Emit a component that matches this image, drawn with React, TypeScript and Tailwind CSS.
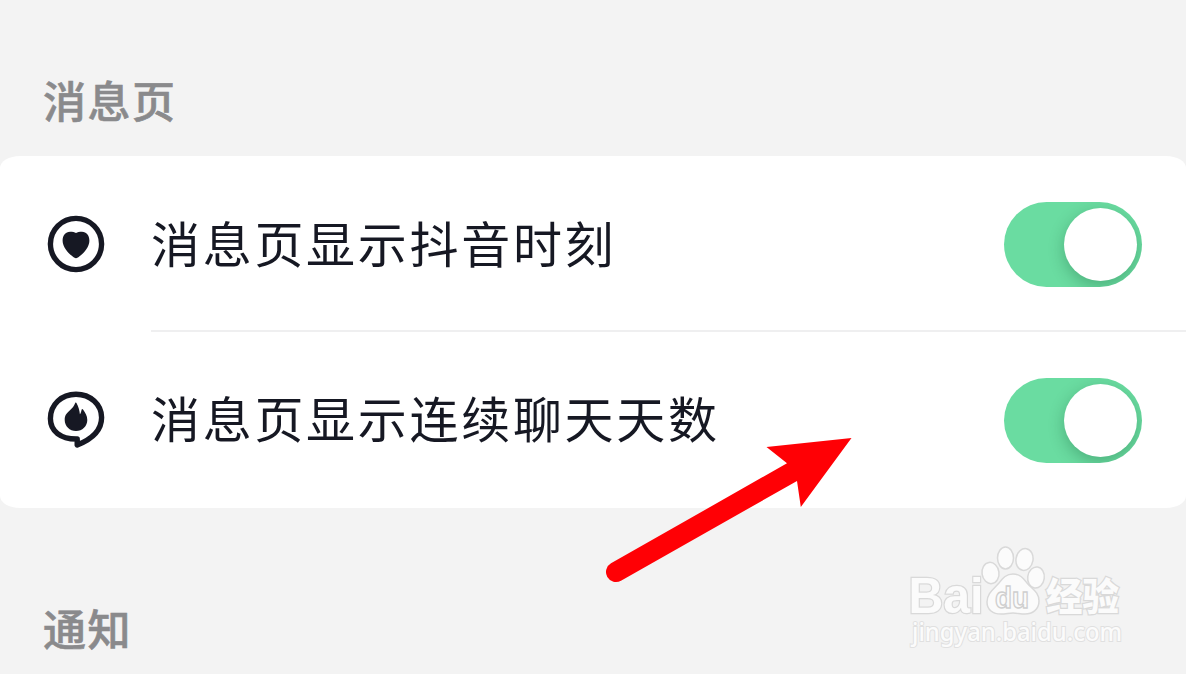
import { ReactNode } from 'react'

interface SettingRowProps {
  icon: ReactNode
  label: string
  divider?: boolean
}

function HeartIcon() {
  return (
    <svg className="h-[60px] w-[60px]" viewBox="0 0 60 60" fill="none">
      <circle cx="30" cy="30" r="25.6" stroke="#161823" strokeWidth="5.4" />
      <path
        d="M30 44.300c-1.800 0-13.400-8.600-13.400-17.600 0-5.300 3-8.900 7.400-8.900 2.600 0 4.600.3 6 1.300 1.400-1 3.400-1.300 6-1.300 4.400 0 7.400 3.600 7.400 8.900 0 9-11.600 17.600-13.400 17.600Z"
        fill="#161823"
      />
    </svg>
  )
}

function FlameIcon() {
  return (
    <svg className="h-[60px] w-[60px]" viewBox="0 0 60 60" fill="none">
      <path
        d="M31.200 49C14.500 49.300 4.400 41 4.400 28.500 4.400 14.500 15.500 4.200 30 4.200s25.600 10.300 25.600 23.300c0 13-10.500 22-24.400 27.500Z"
        stroke="#161823"
        strokeWidth="5.400"
        strokeLinejoin="round"
      />
      <path
        d="M29.200 13.100c.4-.7 1-.6 1.400.1 1.700 3.200 3 7.300 3.300 11.100.9-1 1.400-2.700 1.700-4.500.2-.9.900-1 1.400-.2 2.400 3.400 4.300 6.600 4.300 10.300 0 6.200-4.900 11-11.300 11s-11.300-4.800-11.300-11c0-5.300 2.700-7.300 5.500-9.900 2-1.900 4-3.800 5-6.900Z"
        fill="#161823"
      />
    </svg>
  )
}

function Toggle() {
  return (
    <button
      role="switch"
      aria-checked="true"
      className="flex h-[85px] w-[138px] items-center justify-end overflow-hidden rounded-full bg-[#6adca1] pr-[5px]"
    >
      <span className="h-[73px] w-[73px] rounded-full bg-white shadow-[0_5px_16px_rgba(0,60,30,0.28)]" />
    </button>
  )
}

function SettingRow({ icon, label, divider }: SettingRowProps) {
  return (
    <div className="flex h-[176px] pl-[46px]">
      <div className="flex w-[105px] items-center">{icon}</div>
      <div
        className={`flex flex-1 items-center justify-between pr-[44px] ${divider ? 'border-b-2 border-[#efeff0] pt-[3px]' : ''}`}
      >
        <span className="pb-[7px] text-[49px] leading-none tracking-[2.7px] text-[#161823]">{label}</span>
        <Toggle />
      </div>
    </div>
  )
}

function Arrow() {
  return (
    <svg className="absolute left-[600px] top-[430px] h-[160px] w-[260px]" viewBox="600 430 260 160">
      <path
        d="M851.500 438 766.500 447 787 463.300 611 563.300A10 10 0 0 0 621 580.700L797 481 800.800 507Z"
        fill="#ff0005"
      />
    </svg>
  )
}

function Watermark() {
  return (
    <svg
      className="absolute left-[900px] top-[535px] h-[125px] w-[240px]"
      viewBox="0 0 240 125"
      fill="#fbfbfb"
      stroke="#d9d9d9"
      strokeWidth="1.5"
    >
      <g paintOrder="stroke">
        <text x="8.500" y="78" fontSize="50" fontWeight="700" textLength="75" lengthAdjust="spacingAndGlyphs" strokeWidth="2.500" fontFamily="Liberation Sans, sans-serif">Bai</text>
        <text x="146" y="75" fontSize="38" fontWeight="900" textLength="73" lengthAdjust="spacingAndGlyphs" strokeWidth="2.500" fontFamily="Noto Sans CJK SC, sans-serif">经验</text>
      </g>
      <ellipse cx="90.500" cy="38" rx="8.500" ry="10.700" transform="rotate(-8 90.500 38)" />
      <ellipse cx="105.500" cy="23" rx="8" ry="11" />
      <ellipse cx="124.500" cy="24.500" rx="8.500" ry="11" transform="rotate(10 124.500 24.500)" />
      <ellipse cx="136" cy="42.500" rx="8.300" ry="10.500" transform="rotate(8 136 42.500)" />
      <path d="M113 39c7 0 10 4 14 9 5 6 12 9 12 18 0 9-7 13-14 13-5 0-8-1-12-1s-7 1-12 1c-8 0-14-4-14-12 0-9 7-13 12-19 4-5 7-9 14-9Z" />
      <text x="95" y="73" fontSize="30" fontWeight="700" textLength="34" lengthAdjust="spacingAndGlyphs" strokeWidth="1.400" stroke="#cfcfcf" fontFamily="Liberation Sans, sans-serif">du</text>
      <text x="12" y="106" fontSize="25.500" fontWeight="500" textLength="210" lengthAdjust="spacingAndGlyphs" paintOrder="stroke" stroke="#e0e0e0" strokeWidth="2" fontFamily="Noto Sans, sans-serif">jingyan.baidu.com</text>
    </svg>
  )
}

export default function App() {
  return (
    <main className="relative h-[674px] w-[1186px] overflow-hidden bg-[#f3f3f3] font-['Noto_Sans_CJK_SC',sans-serif]">
      <h2 className="flex h-[156px] items-end pb-[35px] pl-[43px] text-[43px] font-medium leading-none tracking-[1.500px] text-[#8a8a8c] [-webkit-text-stroke:0.6px_#8a8a8c]">
        消息页
      </h2>
      <section className="rounded-[20px/12px] bg-white">
        <SettingRow icon={<HeartIcon />} label="消息页显示抖音时刻" divider />
        <SettingRow icon={<FlameIcon />} label="消息页显示连续聊天天数" />
      </section>
      <h2 className="pl-[43px] pt-[98px] text-[43px] font-medium leading-none tracking-[1.500px] text-[#8a8a8c] [-webkit-text-stroke:0.6px_#8a8a8c]">
        通知
      </h2>
      <Arrow />
      <Watermark />
    </main>
  )
}
